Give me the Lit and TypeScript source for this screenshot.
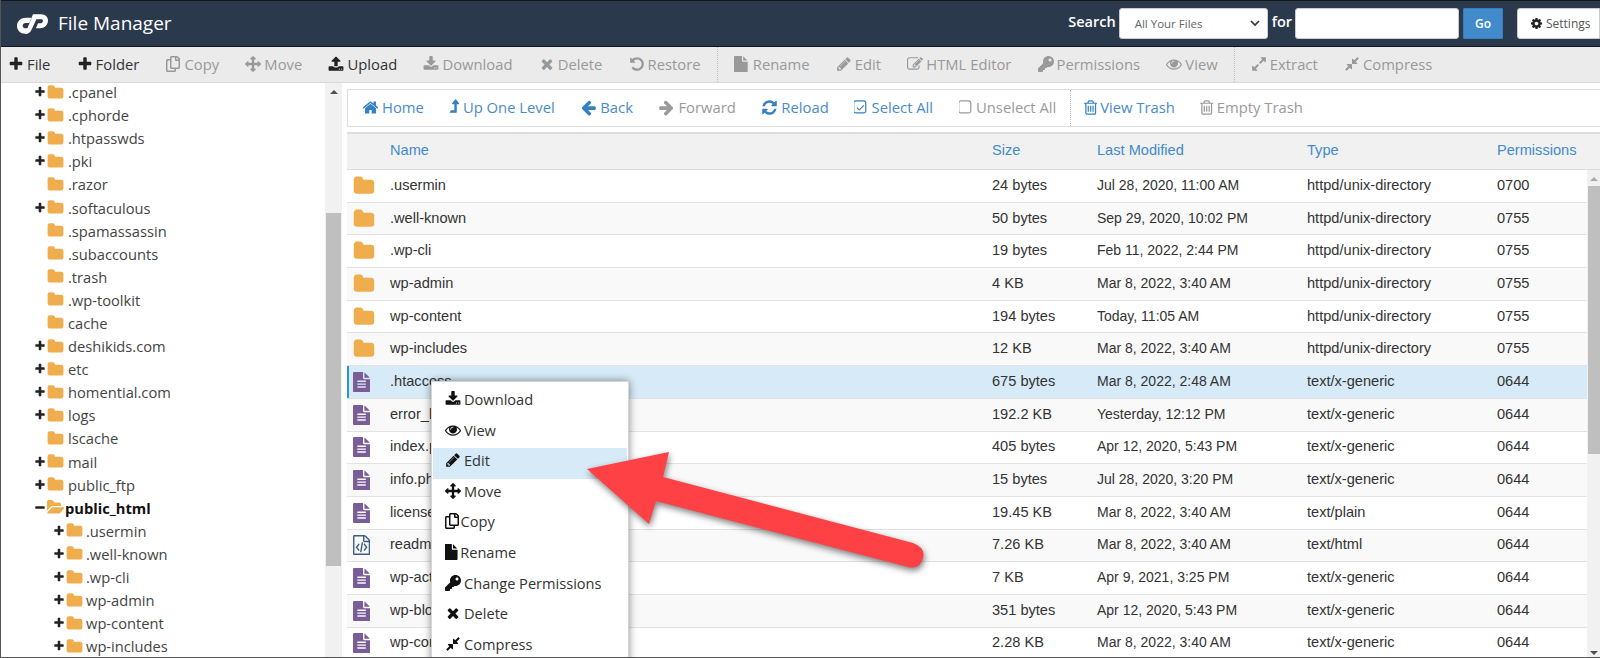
import { LitElement, html, css, svg } from "lit";
import { customElement } from "lit/decorators.js";

const P: Record<string, string> = {
  plus: "M1600 736v192q0 40-28 68t-68 28h-416v416q0 40-28 68t-68 28h-192q-40 0-68-28t-28-68v-416h-416q-40 0-68-28t-28-68v-192q0-40 28-68t68-28h416v-416q0-40 28-68t68-28h192q40 0 68 28t28 68v416h416q40 0 68 28t28 68z",
  minus: "M1600 736v192q0 40-28 68t-68 28h-1216q-40 0-68-28t-28-68v-192q0-40 28-68t68-28h1216q40 0 68 28t28 68z",
  folder: "M1728 608v704q0 92-66 158t-158 66h-1216q-92 0-158-66t-66-158v-960q0-92 66-158t158-66h320q92 0 158 66t66 158v32h672q92 0 158 66t66 158z",
  folderOpen: "M1845 931q0 35-53 93l-336 396q-43 51-120.5 86.5t-143.5 35.5h-1088q-34 0-60.5-13t-26.5-43q0-35 53-93l336-396q43-51 120.5-86.5t143.5-35.5h1088q34 0 60.5 13t26.5 43zm-343-344v160h-832q-94 0-197 47.5t-164 119.5l-337 396-5 6q0-4-.5-12.5t-.5-12.5v-960q0-92 66-158t158-66h320q92 0 158 66t66 158v32h544q92 0 158 66t66 158z",
  home: "M1472 992v480q0 26-19 45t-45 19h-384v-384h-256v384h-384q-26 0-45-19t-19-45v-480q0-1 .5-3t.5-3l575-474 575 474q1 2 1 6zm223-69l-62 74q-8 9-21 11h-3q-13 0-21-7l-692-577-692 577q-12 8-24 7-13-2-21-11l-62-74q-8-10-7-23.5t11-21.5l719-599q32-26 76-26t76 26l244 204v-195q0-14 9-23t23-9h192q14 0 23 9t9 23v408l219 182q10 8 11 21.5t-7 23.5z",
  levelUp: "M1395 508q-17 36-58 36h-192v864q0 14-9 23t-23 9h-704q-21 0-29-18-8-20 4-35l160-192q9-11 25-11h320v-640h-192q-41 0-58-36-17-37 9-68l320-384q18-22 49-22t49 22l320 384q27 32 9 68z",
  left: "M1664 896v128q0 53-32.5 90.5t-84.5 37.5h-704l293 294q38 36 38 90t-38 90l-75 76q-37 37-90 37-52 0-91-37l-651-652q-37-37-37-90 0-52 37-91l651-650q38-38 91-38 52 0 90 38l75 74q38 38 38 91t-38 91l-293 293h704q52 0 84.5 37.5t32.5 90.5z",
  right: "M1600 960q0 54-37 91l-651 651q-39 37-91 37-51 0-90-37l-75-75q-38-38-38-91t38-91l293-293h-704q-52 0-84.5-37.5t-32.5-90.5v-128q0-53 32.5-90.5t84.5-37.5h704l-293-294q-38-36-38-90t38-90l75-75q38-38 90-38 53 0 91 38l651 651q37 35 37 90z",
  refresh: "M1639 1056q0 5-1 7-64 268-268 434.5t-478 166.5q-146 0-282.5-55t-243.5-157l-129 129q-19 19-45 19t-45-19-19-45v-448q0-26 19-45t45-19h448q26 0 45 19t19 45-19 45l-137 137q71 66 161 102t187 36q134 0 250-65t186-179q11-17 53-117 8-23 30-23h192q13 0 22.5 9.5t9.5 22.5zm25-800v448q0 26-19 45t-45 19h-448q-26 0-45-19t-19-45 19-45l138-138q-148-137-349-137-134 0-250 65t-186 179q-11 17-53 117-8 23-30 23h-199q-13 0-22.5-9.5t-9.5-22.5v-7q65-268 270-434.5t480-166.5q146 0 284 55.5t245 156.5l130-129q19-19 45-19t45 19 19 45z",
  square: "M1120 256h-832q-66 0-113 47t-47 113v832q0 66 47 113t113 47h832q66 0 113-47t47-113v-832q0-66-47-113t-113-47zm288 160v832q0 119-84.5 203.5t-203.5 84.5h-832q-119 0-203.5-84.5t-84.5-203.5v-832q0-119 84.5-203.5t203.5-84.5h832q119 0 203.5 84.5t84.5 203.5z",
  checkSquare: "M1120 256h-832q-66 0-113 47t-47 113v832q0 66 47 113t113 47h832q66 0 113-47t47-113v-832q0-66-47-113t-113-47zm288 160v832q0 119-84.5 203.5t-203.5 84.5h-832q-119 0-203.5-84.5t-84.5-203.5v-832q0-119 84.5-203.5t203.5-84.5h832q119 0 203.5 84.5t84.5 203.5zM1100 620l90 90-540 540-290-290 90-90 200 200z",
  trash: "M704 736v576q0 14-9 23t-23 9h-64q-14 0-23-9t-9-23v-576q0-14 9-23t23-9h64q14 0 23 9t9 23zm256 0v576q0 14-9 23t-23 9h-64q-14 0-23-9t-9-23v-576q0-14 9-23t23-9h64q14 0 23 9t9 23zm256 0v576q0 14-9 23t-23 9h-64q-14 0-23-9t-9-23v-576q0-14 9-23t23-9h64q14 0 23 9t9 23zm128 724v-948h-896v948q0 22 7 40.5t14.5 27 10.5 8.5h832q3 0 10.5-8.5t14.5-27 7-40.5zm-672-1076h448l-48-117q-7-9-17-11h-317q-10 2-17 11zm928 32v64q0 14-9 23t-23 9h-96v948q0 83-47 143.5t-113 60.5h-832q-66 0-113-58.5t-47-141.5v-952h-96q-14 0-23-9t-9-23v-64q0-14 9-23t23-9h309l70-167q15-37 54-63t79-26h320q40 0 79 26t54 63l70 167h309q14 0 23 9t9 23z",
  copy: "M433.941 65.941l-51.882-51.882A48 48 0 0 0 348.118 0H176c-26.51 0-48 21.49-48 48v48H48c-26.51 0-48 21.49-48 48v320c0 26.51 21.49 48 48 48h224c26.51 0 48-21.49 48-48v-48h80c26.51 0 48-21.49 48-48V99.882a48 48 0 0 0-14.059-33.941zM266 464H54a6 6 0 0 1-6-6V150a6 6 0 0 1 6-6h74v224c0 26.51 21.49 48 48 48h96v42a6 6 0 0 1-6 6zm128-96H182a6 6 0 0 1-6-6V54a6 6 0 0 1 6-6h106v88c0 13.255 10.745 24 24 24h88v202a6 6 0 0 1-6 6zm6-256h-64V48h9.632c1.591 0 3.117.632 4.243 1.757l48.368 48.368a6 6 0 0 1 1.757 4.243V112z",
  move: "M1792 896q0 26-19 45l-256 256q-19 19-45 19t-45-19-19-45v-128h-384v384h128q26 0 45 19t19 45-19 45l-256 256q-19 19-45 19t-45-19l-256-256q-19-19-19-45t19-45 45-19h128v-384h-384v128q0 26-19 45t-45 19-45-19l-256-256q-19-19-19-45t19-45l256-256q19-19 45-19t45 19 19 45v128h384v-384h-128q-26 0-45-19t-19-45 19-45l256-256q19-19 45-19t45 19l256 256q19 19 19 45t-19 45-45 19h-128v384h384v-128q0-26 19-45t45-19 45 19l256 256q19 19 19 45z",
  upload: "M1344 1472q0-26-19-45t-45-19-45 19-19 45 19 45 45 19 45-19 19-45zm256 0q0-26-19-45t-45-19-45 19-19 45 19 45 45 19 45-19 19-45zm128-224v320q0 40-28 68t-68 28h-1472q-40 0-68-28t-28-68v-320q0-40 28-68t68-28h427q21 56 70.5 92t110.5 36h256q61 0 110.5-36t70.5-92h427q40 0 68 28t28 68zm-325-648q-17 40-59 40h-256v448q0 26-19 45t-45 19h-256q-26 0-45-19t-19-45v-448h-256q-42 0-59-40-17-39 14-69l448-448q18-19 45-19t45 19l448 448q31 30 14 69z",
  download: "M1344 1344q0-26-19-45t-45-19-45 19-19 45 19 45 45 19 45-19 19-45zm256 0q0-26-19-45t-45-19-45 19-19 45 19 45 45 19 45-19 19-45zm128-224v320q0 40-28 68t-68 28h-1472q-40 0-68-28t-28-68v-320q0-40 28-68t68-28h465l135 136q58 56 136 56t136-56l136-136h464q40 0 68 28t28 68zm-325-569q17 41-14 70l-448 448q-18 19-45 19t-45-19l-448-448q-31-29-14-70 17-39 59-39h256v-448q0-26 19-45t45-19h256q26 0 45 19t19 45v448h256q42 0 59 39z",
  times: "M1490 1322q0 40-28 68l-136 136q-28 28-68 28t-68-28l-294-294-294 294q-28 28-68 28t-68-28l-136-136q-28-28-28-68t28-68l294-294-294-294q-28-28-28-68t28-68l136-136q28-28 68-28t68 28l294 294 294-294q28-28 68-28t68 28l136 136q28 28 28 68t-28 68l-294 294 294 294q28 28 28 68z",
  undo: "M1664 896q0 156-61 298t-164 245-245 164-298 61q-172 0-327-72.5t-264-204.5q-7-10-6.5-22.5t8.5-20.5l137-138q10-9 25-9 16 2 23 12 73 95 179 147t225 52q104 0 198.5-40.5t163.5-109.5 109.5-163.5 40.5-198.5-40.5-198.5-109.5-163.5-163.5-109.5-198.5-40.5q-98 0-188 35.5t-160 101.5l137 138q31 30 14 69-17 40-59 40h-448q-26 0-45-19t-19-45v-448q0-42 40-59 39-17 69 14l130 129q107-101 244.5-156.5t284.5-55.5q156 0 298 61t245 164 164 245 61 298z",
  file: "M1024 512v-472q22 14 36 28l408 408q14 14 28 36h-472zm-128 32q0 40 28 68t68 28h544v1056q0 40-28 68t-68 28h-1344q-40 0-68-28t-28-68v-1600q0-40 28-68t68-28h800v544z",
  fileText: "M1596 476q14 14 28 36h-472v-472q22 14 36 28zm-476 164h544v1056q0 40-28 68t-68 28h-1344q-40 0-68-28t-28-68v-1600q0-40 28-68t68-28h800v544q0 40 28 68t68 28zm160 736v-64q0-14-9-23t-23-9h-704q-14 0-23 9t-9 23v64q0 14 9 23t23 9h704q14 0 23-9t9-23zm0-256v-64q0-14-9-23t-23-9h-704q-14 0-23 9t-9 23v64q0 14 9 23t23 9h704q14 0 23-9t9-23zm0-256v-64q0-14-9-23t-23-9h-704q-14 0-23 9t-9 23v64q0 14 9 23t23 9h704q14 0 23-9t9-23z",
  fileCode: "M1596 380q28 28 48 76t20 88v1152q0 40-28 68t-68 28h-1344q-40 0-68-28t-28-68v-1600q0-40 28-68t68-28h896q40 0 88 20t76 48zm-444-244v376h376q-10-29-22-41l-313-313q-12-12-41-22zm384 1528v-1024h-416q-40 0-68-28t-28-68v-416h-768v1536h1280zm-928-888q8-11 21-12.5t24 6.5l51 38q11 8 12.5 21t-6.5 24l-182 243 182 243q8 11 6.5 24t-12.5 21l-51 38q-11 8-24 6.5t-21-12.5l-226-301q-14-19 0-38zm802 301q14 19 0 38l-226 301q-8 11-21 12.5t-24-6.5l-51-38q-11-8-12.5-21t6.5-24l182-243-182-243q-8-11-6.5-24t12.5-21l51-38q11-8 24-6.5t21 12.5zm-620 461q-13-2-20.5-13t-5.5-24l138-831q2-13 13-20.5t24-5.5l63 10q13 2 20.5 13t5.5 24l-138 831q-2 13-13 20.5t-24 5.5z",
  pencil: "M491 1536l91-91-235-235-91 91v107h128v128h107zm523-928q0-22-22-22-10 0-17 7l-542 542q-7 7-7 17 0 22 22 22 10 0 17-7l542-542q7-7 7-17zm-54-192l416 416-832 832h-416v-416zm683 96q0 53-37 90l-166 166-416-416 166-165q36-38 90-38 53 0 91 38l235 234q37 39 37 91z",
  pencilSquare: "M888 1184l116-116-152-152-116 116v56h96v96h56zm440-720q-16-16-33 1l-350 350q-17 17-1 33t33-1l350-350q17-17 1-33zm80 594v190q0 119-84.5 203.5t-203.5 84.5h-832q-119 0-203.5-84.5t-84.5-203.5v-832q0-119 84.5-203.5t203.5-84.5h832q63 0 117 25 15 7 18 23 3 17-9 29l-49 49q-14 14-32 8-23-6-45-6h-832q-66 0-113 47t-47 113v832q0 66 47 113t113 47h832q66 0 113-47t47-113v-126q0-13 9-22l64-64q15-15 35-7t20 29zm-96-738l288 288-672 672h-288v-288zm444 132l-92 92-288-288 92-92q27-27 68-27t68 27l152 152q28 28 28 68t-28 68z",
  key: "M512 176.001C512 273.203 433.202 352 336 352c-11.22 0-22.19-1.062-32.827-3.069l-24.012 27.014A23.999 23.999 0 0 1 261.223 384H224v40c0 13.255-10.745 24-24 24h-40v40c0 13.255-10.745 24-24 24H24c-13.255 0-24-10.745-24-24v-78.059c0-6.365 2.529-12.47 7.029-16.971l161.802-161.802C163.108 213.814 160 195.271 160 176 160 78.798 238.797.001 335.999 0 433.488-.001 512 78.511 512 176.001zM336 128c0 26.51 21.49 48 48 48s48-21.49 48-48-21.49-48-48-48-48 21.49-48 48z",
  eye: "M1664 960q-152-236-381-353 61 104 61 225 0 185-131.5 316.5t-316.5 131.5-316.5-131.5-131.5-316.5q0-121 61-225-229 117-381 353 133 205 333.5 326.5t434.5 121.5 434.5-121.5 333.5-326.5zm-720-384q0-20-14-34t-34-14q-125 0-214.5 89.5t-89.5 214.5q0 20 14 34t34 14 34-14 14-34q0-86 61-147t147-61q20 0 34-14t14-34zm848 384q0 34-20 69-140 230-376.5 368.5t-499.5 138.5-499.5-139-376.5-368q-20-35-20-69t20-69q140-229 376.5-368t499.5-139 499.5 139 376.5 368q20 35 20 69z",
  expand: "M883 1056q0 13-10 23l-332 332 144 144q19 19 19 45t-19 45-45 19h-448q-26 0-45-19t-19-45v-448q0-26 19-45t45-19 45 19l144 144 332-332q10-10 23-10t23 10l114 114q10 10 10 23zm781-864v448q0 26-19 45t-45 19-45-19l-144-144-332 332q-10 10-23 10t-23-10l-114-114q-10-10-10-23t10-23l332-332-144-144q-19-19-19-45t19-45 45-19h448q26 0 45 19t19 45z",
  compress: "M896 960v448q0 26-19 45t-45 19-45-19l-144-144-332 332q-10 10-23 10t-23-10l-114-114q-10-10-10-23t10-23l332-332-144-144q-19-19-19-45t19-45 45-19h448q26 0 45 19t19 45zm755-672q0 13-10 23l-332 332 144 144q19 19 19 45t-19 45-45 19h-448q-26 0-45-19t-19-45v-448q0-26 19-45t45-19 45 19l144 144 332-332q10-10 23-10t23 10l114 114q10 10 10 23z",
  gear: "M1152 896q0-106-75-181t-181-75-181 75-75 181 75 181 181 75 181-75 75-181zm512-109v222q0 12-8 23t-20 13l-185 28q-19 54-39 91 35 50 107 138 10 12 10 25t-9 23q-27 37-99 108t-94 71q-12 0-26-9l-138-108q-44 23-91 38-16 136-29 186-7 28-36 28h-222q-14 0-24.5-8.5t-11.5-21.5l-28-184q-49-16-90-37l-141 107q-10 9-25 9-14 0-25-11-126-114-165-168-7-10-7-23 0-12 8-23 15-21 51-66.5t54-70.5q-27-50-41-99l-183-27q-13-2-21-12.5t-8-23.5v-222q0-12 8-23t19-13l186-28q14-46 39-92-40-57-107-138-10-12-10-24 0-10 9-23 26-36 98.5-107.5t94.5-71.5q13 0 26 10l138 107q44-23 91-38 16-136 29-186 7-28 36-28h222q14 0 24.5 8.5t11.5 21.5l28 184q49 16 90 37l142-107q9-9 24-9 13 0 25 10 129 119 165 170 7 8 7 22 0 12-8 23-15 21-51 66.5t-54 70.5q26 50 41 98l183 28q13 2 21 12.5t8 23.5z",
};

const VB: Record<string, string> = {
  folderOpen: "0 0 1920 1792",
  copy: "0 0 448 512",
  key: "0 0 512 512",
  file: "128 0 1536 1792",
  fileText: "128 0 1536 1792",
  fileCode: "128 0 1536 1792",
  levelUp: "320 0 1120 1792",
  trash: "192 0 1408 1792",
  square: "96 0 1523 1792",
  checkSquare: "96 0 1523 1792",
};
const NARROW: Record<string, string> = { levelUp: "lvl", trash: "tr", square: "sq", checkSquare: "sq" };
const ic = (name: string, cls = "") =>
  html`<svg class="ic ${cls}" viewBox=${VB[name] ?? "0 0 1792 1792"} fill="currentColor" aria-hidden="true">${svg`<path d=${P[name]} />`}</svg>`;

type Tool = [string, string, boolean];
const tools: (Tool | null)[] = [
  ["plus", "File", true], ["plus", "Folder", true], ["copy", "Copy", false], ["move", "Move", false],
  ["upload", "Upload", true], ["download", "Download", false], ["times", "Delete", false], ["undo", "Restore", false],
  null,
  ["file", "Rename", false], ["pencil", "Edit", false], ["pencilSquare", "HTML Editor", false], ["key", "Permissions", false], ["eye", "View", false],
  null,
  ["expand", "Extract", false], ["compress", "Compress", false],
];
const nav: (Tool | null)[] = [
  ["home", "Home", true], ["levelUp", "Up One Level", true], ["left", "Back", true], ["right", "Forward", false],
  ["refresh", "Reload", true], ["checkSquare", "Select All", true], ["square", "Unselect All", false],
  null,
  ["trash", "View Trash", true], ["trash", "Empty Trash", false],
];
const tree: [string, number, string][] = [
  [".cpanel", 1, "+"], [".cphorde", 1, "+"], [".htpasswds", 1, "+"], [".pki", 1, "+"], [".razor", 1, ""],
  [".softaculous", 1, "+"], [".spamassassin", 1, ""], [".subaccounts", 1, ""], [".trash", 1, ""], [".wp-toolkit", 1, ""],
  ["cache", 1, ""], ["deshikids.com", 1, "+"], ["etc", 1, "+"], ["homential.com", 1, "+"], ["logs", 1, "+"], ["lscache", 1, ""],
  ["mail", 1, "+"], ["public_ftp", 1, "+"], ["public_html", 1, "-"],
  [".usermin", 2, "+"], [".well-known", 2, "+"], [".wp-cli", 2, "+"], ["wp-admin", 2, "+"], ["wp-content", 2, "+"], ["wp-includes", 2, "+"],
];
const D = "httpd/unix-directory", G = "text/x-generic", M = "Mar 8, 2022, 3:40 AM";
const rows: [string, string, string, string, string, string][] = [
  ["folder", ".usermin", "24 bytes", "Jul 28, 2020, 11:00 AM", D, "0700"],
  ["folder", ".well-known", "50 bytes", "Sep 29, 2020, 10:02 PM", D, "0755"],
  ["folder", ".wp-cli", "19 bytes", "Feb 11, 2022, 2:44 PM", D, "0755"],
  ["folder", "wp-admin", "4 KB", M, D, "0755"],
  ["folder", "wp-content", "194 bytes", "Today, 11:05 AM", D, "0755"],
  ["folder", "wp-includes", "12 KB", M, D, "0755"],
  ["fileText", ".htaccess", "675 bytes", "Mar 8, 2022, 2:48 AM", G, "0644"],
  ["fileText", "error_log", "192.2 KB", "Yesterday, 12:12 PM", G, "0644"],
  ["fileText", "index.php", "405 bytes", "Apr 12, 2020, 5:43 PM", G, "0644"],
  ["fileText", "info.php", "15 bytes", "Jul 28, 2020, 3:20 PM", G, "0644"],
  ["fileText", "license.txt", "19.45 KB", M, "text/plain", "0644"],
  ["fileCode", "readme.html", "7.26 KB", M, "text/html", "0644"],
  ["fileText", "wp-activate.php", "7 KB", "Apr 9, 2021, 3:25 PM", G, "0644"],
  ["fileText", "wp-blog-header.php", "351 bytes", "Apr 12, 2020, 5:43 PM", G, "0644"],
  ["fileText", "wp-comments-post.php", "2.28 KB", M, G, "0644"],
];
const menu: [string, string][] = [
  ["download", "Download"], ["eye", "View"], ["pencil", "Edit"], ["move", "Move"], ["copy", "Copy"],
  ["file", "Rename"], ["key", "Change Permissions"], ["times", "Delete"], ["compress", "Compress"],
];

@customElement("app-root")
export class AppRoot extends LitElement {
  static styles = css`
    :host { display: block; position: relative; width: 1600px; height: 658px; overflow: hidden; background: #fff;
      font-family: "Open Sans", sans-serif; box-sizing: border-box; border-left: 1px solid #555; border-bottom: 1px solid #555; }
    * { box-sizing: border-box; }
    .page { display: flex; flex-direction: column; height: 657px; }
    .ic { width: 1em; height: 1em; flex: none; display: block; }

    .top { height: 47px; flex: none; display: flex; align-items: center; background: #2a3a4c; color: #fff;
      border-top: 1px solid #14181d; border-bottom: 1px solid #0e1420; padding-right: 0; }
    .logo { width: 31px; height: 20px; margin-left: 16px; flex: none; }
    .title { font-size: 19px; margin-left: 10px; margin-top: -2px; }
    .search { margin-left: auto; display: flex; align-items: center; height: 31px; margin-top: -1px; }
    .lbl { font-size: 14.5px; font-weight: 600; margin-top: -4px; }
    .sel { width: 149px; height: 31px; margin-left: 3px; margin-right: 4px; background: #fff; border: 1px solid #ccc; border-radius: 3px; color: #666;
      font-size: 11.5px; display: flex; align-items: center; justify-content: space-between; padding: 0 6px 0 15px; }
    .sel svg { width: 12px; height: 12px; color: #333; }
    .inp { width: 164px; height: 31px; margin-left: 3px; border: 1px solid #ccc; border-radius: 3px; background: #fff; padding: 0; }
    .go { width: 40px; height: 31px; margin-left: 4px; background: #428bca; border: 1px solid #357ebd; color: #fff; font: 600 12px "Open Sans", sans-serif; border-radius: 1px; display:flex; align-items:center; justify-content:center; }
    .set { width: 83px; height: 31px; margin-left: 14px; background: #fff; border: 1px solid #ccc; border-radius: 3px 0 0 3px; color: #555; font-size: 12px;
      display: flex; align-items: center; gap: 3px; padding-left: 12px; }
    .set .ic { color: #222; font-size: 13px; }

    .tools { height: 36px; flex: none; display: flex; align-items: stretch; background: #ebebeb; border-bottom: 1px solid #d8d8d8; padding: 0 0 1.5px 7px; font-size: 14.8px; }
    .tool { display: flex; align-items: center; gap: 3px; margin-right: 26.2px; color: #999; white-space: nowrap; }
    .tool.on { color: #333; }
    .tool.on .ic { color: #222; }
    .tool .ic { font-size: 16px; }
    .tools .sep { border-left: 1px dotted #bbb; margin: 0 16px -1.5px -10px; }

    .main { flex: 1; min-height: 0; display: flex; }
    .tree { width: 324px; flex: none; overflow: hidden; font-size: 14.7px; color: #444; }
    .list { margin-top: -2.5px; }
    .node { height: 23.1px; display: flex; align-items: center; white-space: nowrap; }
    .node.l1 { padding-left: 33px; }
    .node.l2 { padding-left: 52px; }
    .tog { width: 12px; flex: none; color: #222; font-size: 12px; }
    .fold { color: #f0ad4e; font-size: 17px; margin: 0 4px 0 1px; flex:none; }
    .node.l2 .fold { margin-right: 3px; }
    .node.open { color: #111; font-weight: 700; }
    .fold.wide { width: 18px; margin-right: 0; }

    .sb { flex: none; background: #f1f1f1; display: flex; flex-direction: column; align-items: center; position: relative; }
    .vtrack { width: 17px; margin-right: 5px; }
    .up { width: 0; height: 0; border-left: 4px solid transparent; border-right: 4px solid transparent; border-bottom: 4px solid #505050; margin-top: 7px; }
    .thumb { background: #bfbfbf; }
    .vtrack .thumb { width: 15px; height: 353px; margin-top: 119px; }

    .right { flex: 1; min-width: 0; display: flex; flex-direction: column; padding-top: 6px; }
    .nav { height: 38px; flex: none; display: flex; align-items: stretch; border: 1px solid #ddd; border-right: none; padding: 0 0 2px 14px; font-size: 14.8px; }
    .nav .tool { color: #9a9a9a; margin-right: 25.5px; }
    .nav .tool.on { color: #4a8bc9; }
    .nav .tool.on .ic { color: #3380c2; }
    .nav .tool .ic { font-size: 17px; }
    .nav .tool .ic.lvl { width: 10.6px; }
    .nav .tool .ic.tr { width: 13.4px; }
    .nav .tool .ic.sq { width: 14.4px; }
    .nav .sep { border-left: 1px dotted #bbb; margin: 0 13px -2px -12px; }

    .thead, .row { display: grid; grid-template-columns: 43px 602px 105px 210px 190px 1fr; align-items: center; }
    .thead { height: 38px; margin-top: 5px; flex: none; padding-bottom: 4px; background: #f1f1f1; border-top: 2px solid #ddd; border-bottom: 1px solid #ddd; color: #428bca; font: 14.6px "Liberation Sans", sans-serif; }
    .body { flex: 1; min-height: 0; display: flex; overflow: hidden; }
    .rows { flex: 1; min-width: 0; overflow: hidden; font: 14.6px "Liberation Sans", sans-serif; color: #333; }
    .row { height: 32.7px; padding-bottom: 2px; border-bottom: 1px solid #e2e2e2; white-space: nowrap; }
    .row:nth-child(even) { background: #f9f9f9; }
    .row.sel1 { background: #d6eaf8; box-shadow: inset 2px 0 0 #2b95d6; }
    .row .date { font-size: 14px; }
    .row .ico { display: flex; padding-left: 6px; margin-top: 2px; }
    .row .ico .ic { font-size: 22px; }
    .row .ico .narrow { font-size: 20px; width: 17.2px; }
    .row .ico.fo { color: #f0ad4e; }
    .row .ico.fi { color: #7a5c99; }
    .row .ico.co { color: #3d5f86; }
    .rtrack { width: 13px; }
    .rtrack .thumb { width: 12px; height: 268px; margin-top: 5px; margin-left: 1px; }
    .rtrack .up { margin-top: 7px; border-bottom-color: #aaa; }
    .rtrack .dn { width: 0; height: 0; border-left: 4px solid transparent; border-right: 4px solid transparent; border-top: 4px solid #505050; position: absolute; bottom: 2px; left: 3px; }

    .ctx { position: absolute; left: 430px; top: 381px; width: 198px; height: 290px; background: #fff; border: 1px solid #d5d5d5; padding: 5px 1px 0; box-shadow: 0 0 8px rgba(0,0,0,.45); font-size: 14.6px; color: #333; }
    .mi { height: 30.6px; padding: 0 0 6.4px 12px; display: flex; align-items: center; gap: 3px; white-space: nowrap; }
    .mi .ic { color: #111; font-size: 16px; }
    .mi .ic.tight { width: auto; margin-right: -1.5px; }
    .mi.hi { background: #d6eaf8; }
    .arrow { position: absolute; left: -1px; top: 0; width: 1600px; height: 658px; pointer-events: none; filter: drop-shadow(1px 3px 3px rgba(0,0,0,.5)); }
  `;

  private tool(t: Tool | null) {
    if (!t) return html`<span class="sep"></span>`;
    return html`<span class="tool ${t[2] ? "on" : ""}">${ic(t[0], NARROW[t[0]] ?? "")}${t[1]}</span>`;
  }

  render() {
    return html`
      <div class="page">
        <header class="top">
          <svg class="logo" viewBox="0 0 32 20" fill="#fff" aria-label="cPanel">
            <path d="M15 3.500H9.500C4 3.500 0 7 0 12c0 4.500 3.500 8 8.500 8H11l2.400-5.500H9C7 14.500 5.800 13.300 5.800 11.800 5.800 10.200 7.200 9 9 9h3.700z" />
            <path d="M16.500 0H25c4.300 0 7 3 7 6.500 0 4.500-3.500 8-8.500 8h-4l2.300-5.200h2.300c1.500 0 2.700-1.200 2.700-2.700 0-.8-.7-1.500-1.600-1.500h-5.200L15.500 15c-1.500 3.400-3 5-6 5H8.500z" />
          </svg>
          <span class="title">File Manager</span>
          <div class="search">
            <span class="lbl">Search</span>
            <div class="sel"><span>All Your Files</span><svg viewBox="0 0 12 12" fill="none" stroke="currentColor" stroke-width="1.700"><path d="M2 4l4 4 4-4" /></svg></div>
            <span class="lbl">for</span>
            <input class="inp" aria-label="Search" />
            <div class="go">Go</div>
            <div class="set">${ic("gear")}Settings</div>
          </div>
        </header>
        <nav class="tools">${tools.map((t) => this.tool(t))}</nav>
        <div class="main">
          <aside class="tree"><div class="list">
            ${tree.map(([n, l, s]) => html`<div class="node l${l} ${s === "-" ? "open" : ""}">
              <span class="tog">${s === "+" ? ic("plus") : s === "-" ? ic("minus") : ""}</span>
              ${s === "-" ? ic("folderOpen", "fold wide") : ic("folder", "fold")}${n}
            </div>`)}
          </div></aside>
          <div class="sb vtrack"><div class="up"></div><div class="thumb"></div></div>
          <section class="right">
            <nav class="nav">${nav.map((t) => this.tool(t))}</nav>
            <div class="thead"><span></span><span>Name</span><span>Size</span><span>Last Modified</span><span>Type</span><span>Permissions</span></div>
            <div class="body">
              <div class="rows">
                ${rows.map((r, i) => html`<div class="row ${i === 6 ? "sel1" : ""}">
                  <span class="ico ${r[0] === "folder" ? "fo" : r[0] === "fileCode" ? "co" : "fi"}">${ic(r[0], r[0] === "folder" ? "" : "narrow")}</span>
                  <span>${r[1]}</span><span>${r[2]}</span><span class="date">${r[3]}</span><span>${r[4]}</span><span>${r[5]}</span>
                </div>`)}
              </div>
              <div class="sb rtrack"><div class="up"></div><div class="thumb"></div><div class="dn"></div></div>
            </div>
          </section>
        </div>
      </div>
      <div class="ctx">
        ${menu.map(([i, t]) => html`<div class="mi ${t === "Edit" ? "hi" : ""}">${ic(i, i === "copy" || i === "file" ? "tight" : "")}${t}</div>`)}
      </div>
      <svg class="arrow" viewBox="0 0 1600 658" aria-hidden="true">
        <path fill="#fe4144" d="M587 469L669 452 663 477 913 543Q926 548 923 558 920 570 908 567L656 501 649 524Z" />
      </svg>
    `;
  }
}
